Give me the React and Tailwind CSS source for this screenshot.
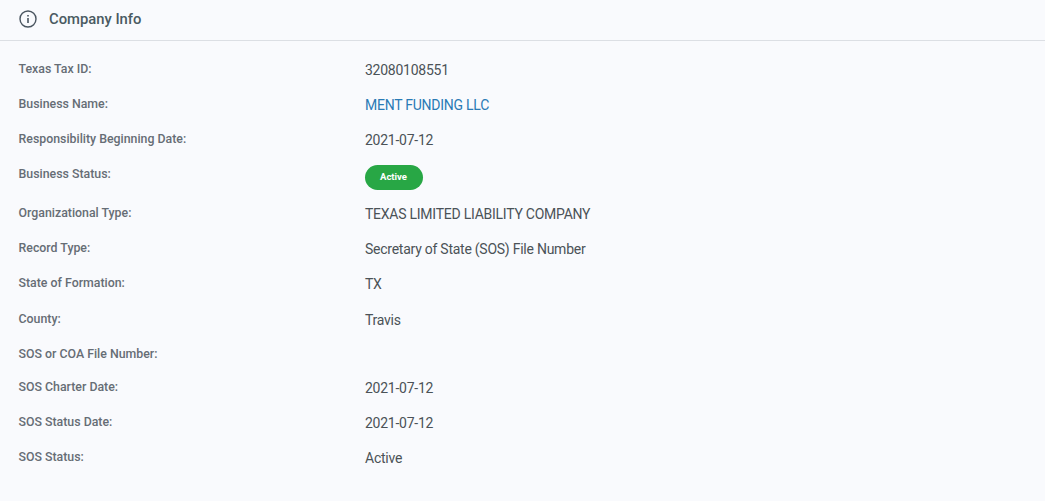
import React from "react";

const rows = [
  ["Texas Tax ID:", "32080108551", "h-[35px]"],
  ["Business Name:", "MENT FUNDING LLC", "h-[35px]", "link"],
  ["Responsibility Beginning Date:", "2021-07-12", "h-[35px]"],
  ["Business Status:", "Active", "h-[39px]", "badge"],
  ["Organizational Type:", "TEXAS LIMITED LIABILITY COMPANY", "h-[35px]"],
  ["Record Type:", "Secretary of State (SOS) File Number", "h-[35px]"],
  ["State of Formation:", "TX", "h-[36px]"],
  ["County:", "Travis", "h-[35px]"],
  ["SOS or COA File Number:", "", "h-[33px]"],
  ["SOS Charter Date:", "2021-07-12", "h-[35px]"],
  ["SOS Status Date:", "2021-07-12", "h-[35px]"],
  ["SOS Status:", "Active", "h-[35px]"],
];

export default function App() {
  return (
    <div className="h-[501px] w-full overflow-hidden bg-[#f9fafd] font-['Roboto',sans-serif]">
      <div className="flex h-[41px] items-center gap-[12px] border-b border-[#dcdfe4] pl-[19px] pb-[3px]">
        <svg width="18" height="18" viewBox="0 0 18 18" fill="none" stroke="#4a5560" strokeWidth="1.4">
          <circle cx="9" cy="9" r="8" />
          <path d="M9 8v5" strokeWidth="1.6" />
          <path d="M9 5v1.5" strokeWidth="1.6" />
        </svg>
        <span className="text-[14.8px] font-medium leading-[20px] text-[#4a5a62]">Company Info</span>
      </div>
      <div className="flex flex-col pt-[10px]">
        {rows.map(([label, value, h, kind]) => (
          <div key={label} className={`flex items-start ${h}`}>
            <div className="w-[365px] shrink-0 pl-[18.5px] pt-[10px] text-[12.35px] font-medium leading-[16px] text-[#666d75]">
              {label}
            </div>
            {kind === "badge" ? (
              <span className="mt-[9px] flex h-[25px] w-[58px] items-center justify-center rounded-full bg-[#28a745] pr-[1px] text-[9.5px] font-bold text-white">
                {value}
              </span>
            ) : (
              <div className={`pt-[9px] text-[14px] leading-[20px] tracking-[-0.25px] ${kind === "link" ? "text-[#2a7ab5]" : "text-[#4b5257]"}`}>
                {value}
              </div>
            )}
          </div>
        ))}
      </div>
    </div>
  );
}
